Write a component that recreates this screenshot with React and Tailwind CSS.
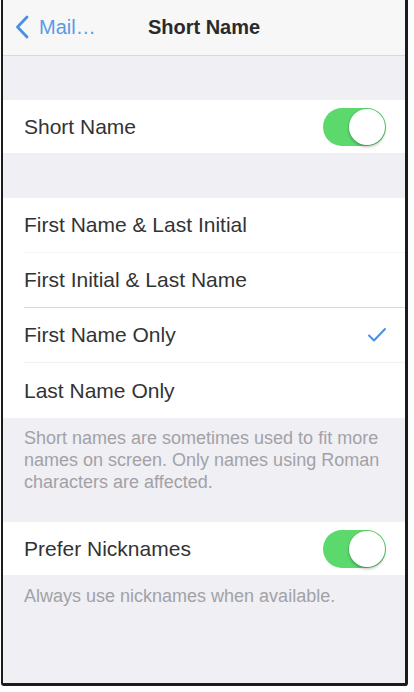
import React from "react";

const font = { fontFamily: '"Liberation Sans", Arial, sans-serif' };

function Toggle() {
  return (
    <div className="flex h-[38px] w-[63px] items-center justify-end rounded-full bg-[#5cd96c] p-[1px]">
      <div className="size-[36px] rounded-full bg-white shadow-[0_2px_3px_rgba(0,0,0,0.25)] ring-1 ring-black/5" />
    </div>
  );
}

function Row({ label, checked, line }) {
  return (
    <div className="flex h-[55px] flex-col">
      <div className="flex flex-1 items-center justify-between pl-[21px] pr-[18px]">
        <span className="text-[21px] text-[#333335]">{label}</span>
        {checked && (
          <svg width="20" height="16" viewBox="0 0 20 16" fill="none">
            <path d="M2 8.5 L7 13.5 L18 2" stroke="#4a90e2" strokeWidth="2" strokeLinecap="round" strokeLinejoin="round" />
          </svg>
        )}
      </div>
      {line && <div className={`ml-[21px] h-px ${line}`} />}
    </div>
  );
}

export default function App() {
  return (
    <div className="h-[692px] w-[414px] bg-white pl-px" style={font}>
      <div className="flex h-[686px] w-[407px] flex-col overflow-hidden rounded-b-[3px] border-b-[3px] border-l-2 border-r-[3px] border-[#1b1b1b] bg-[#efeff4]">
        {/* nav bar */}
        <div className="grid h-[56px] shrink-0 grid-cols-[1fr_auto_1fr] items-center border-b border-[#d8d8db] bg-[#f7f7f8] pb-[2px]">
          <div className="flex items-center gap-[10px] pl-[12px]">
            <svg width="14" height="24" viewBox="0 0 14 24" fill="none">
              <path d="M12 2 L2.5 12 L12 22" stroke="#4a90e2" strokeWidth="2.8" strokeLinecap="round" strokeLinejoin="round" />
            </svg>
            <span className="text-[20px] text-[#5a9ae4]">Mail…</span>
          </div>
          <span className="text-[20px] font-bold text-[#2a2a2a]">Short Name</span>
          <div />
        </div>

        <div className="h-[44px] shrink-0" />

        <div className="flex h-[53px] shrink-0 items-center justify-between bg-white pl-[21px] pr-[19px]">
          <span className="text-[21px] text-[#333335]">Short Name</span>
          <Toggle />
        </div>

        <div className="h-[45px] shrink-0" />

        <div className="flex shrink-0 flex-col bg-white">
          <Row label="First Name & Last Initial" line="bg-[#f6f6f8]" />
          <Row label="First Initial & Last Name" line="bg-[#d9d9dd]" />
          <Row label="First Name Only" checked line="bg-[#f1f1f4]" />
          <Row label="Last Name Only" />
        </div>

        <div className="h-[104px] shrink-0 pl-[21px] pt-[9px] text-[18px] leading-[22px] text-[#a2a2a6]">
          Short names are sometimes used to fit more
          <br />
          names on screen. Only names using Roman
          <br />
          characters are affected.
        </div>

        <div className="flex h-[53px] shrink-0 items-center justify-between bg-white pl-[21px] pr-[19px]">
          <span className="text-[21px] text-[#333335]">Prefer Nicknames</span>
          <Toggle />
        </div>

        <div className="pl-[21px] pt-[10px] text-[18px] leading-[22px] text-[#a2a2a6]">
          Always use nicknames when available.
        </div>
      </div>
    </div>
  );
}
